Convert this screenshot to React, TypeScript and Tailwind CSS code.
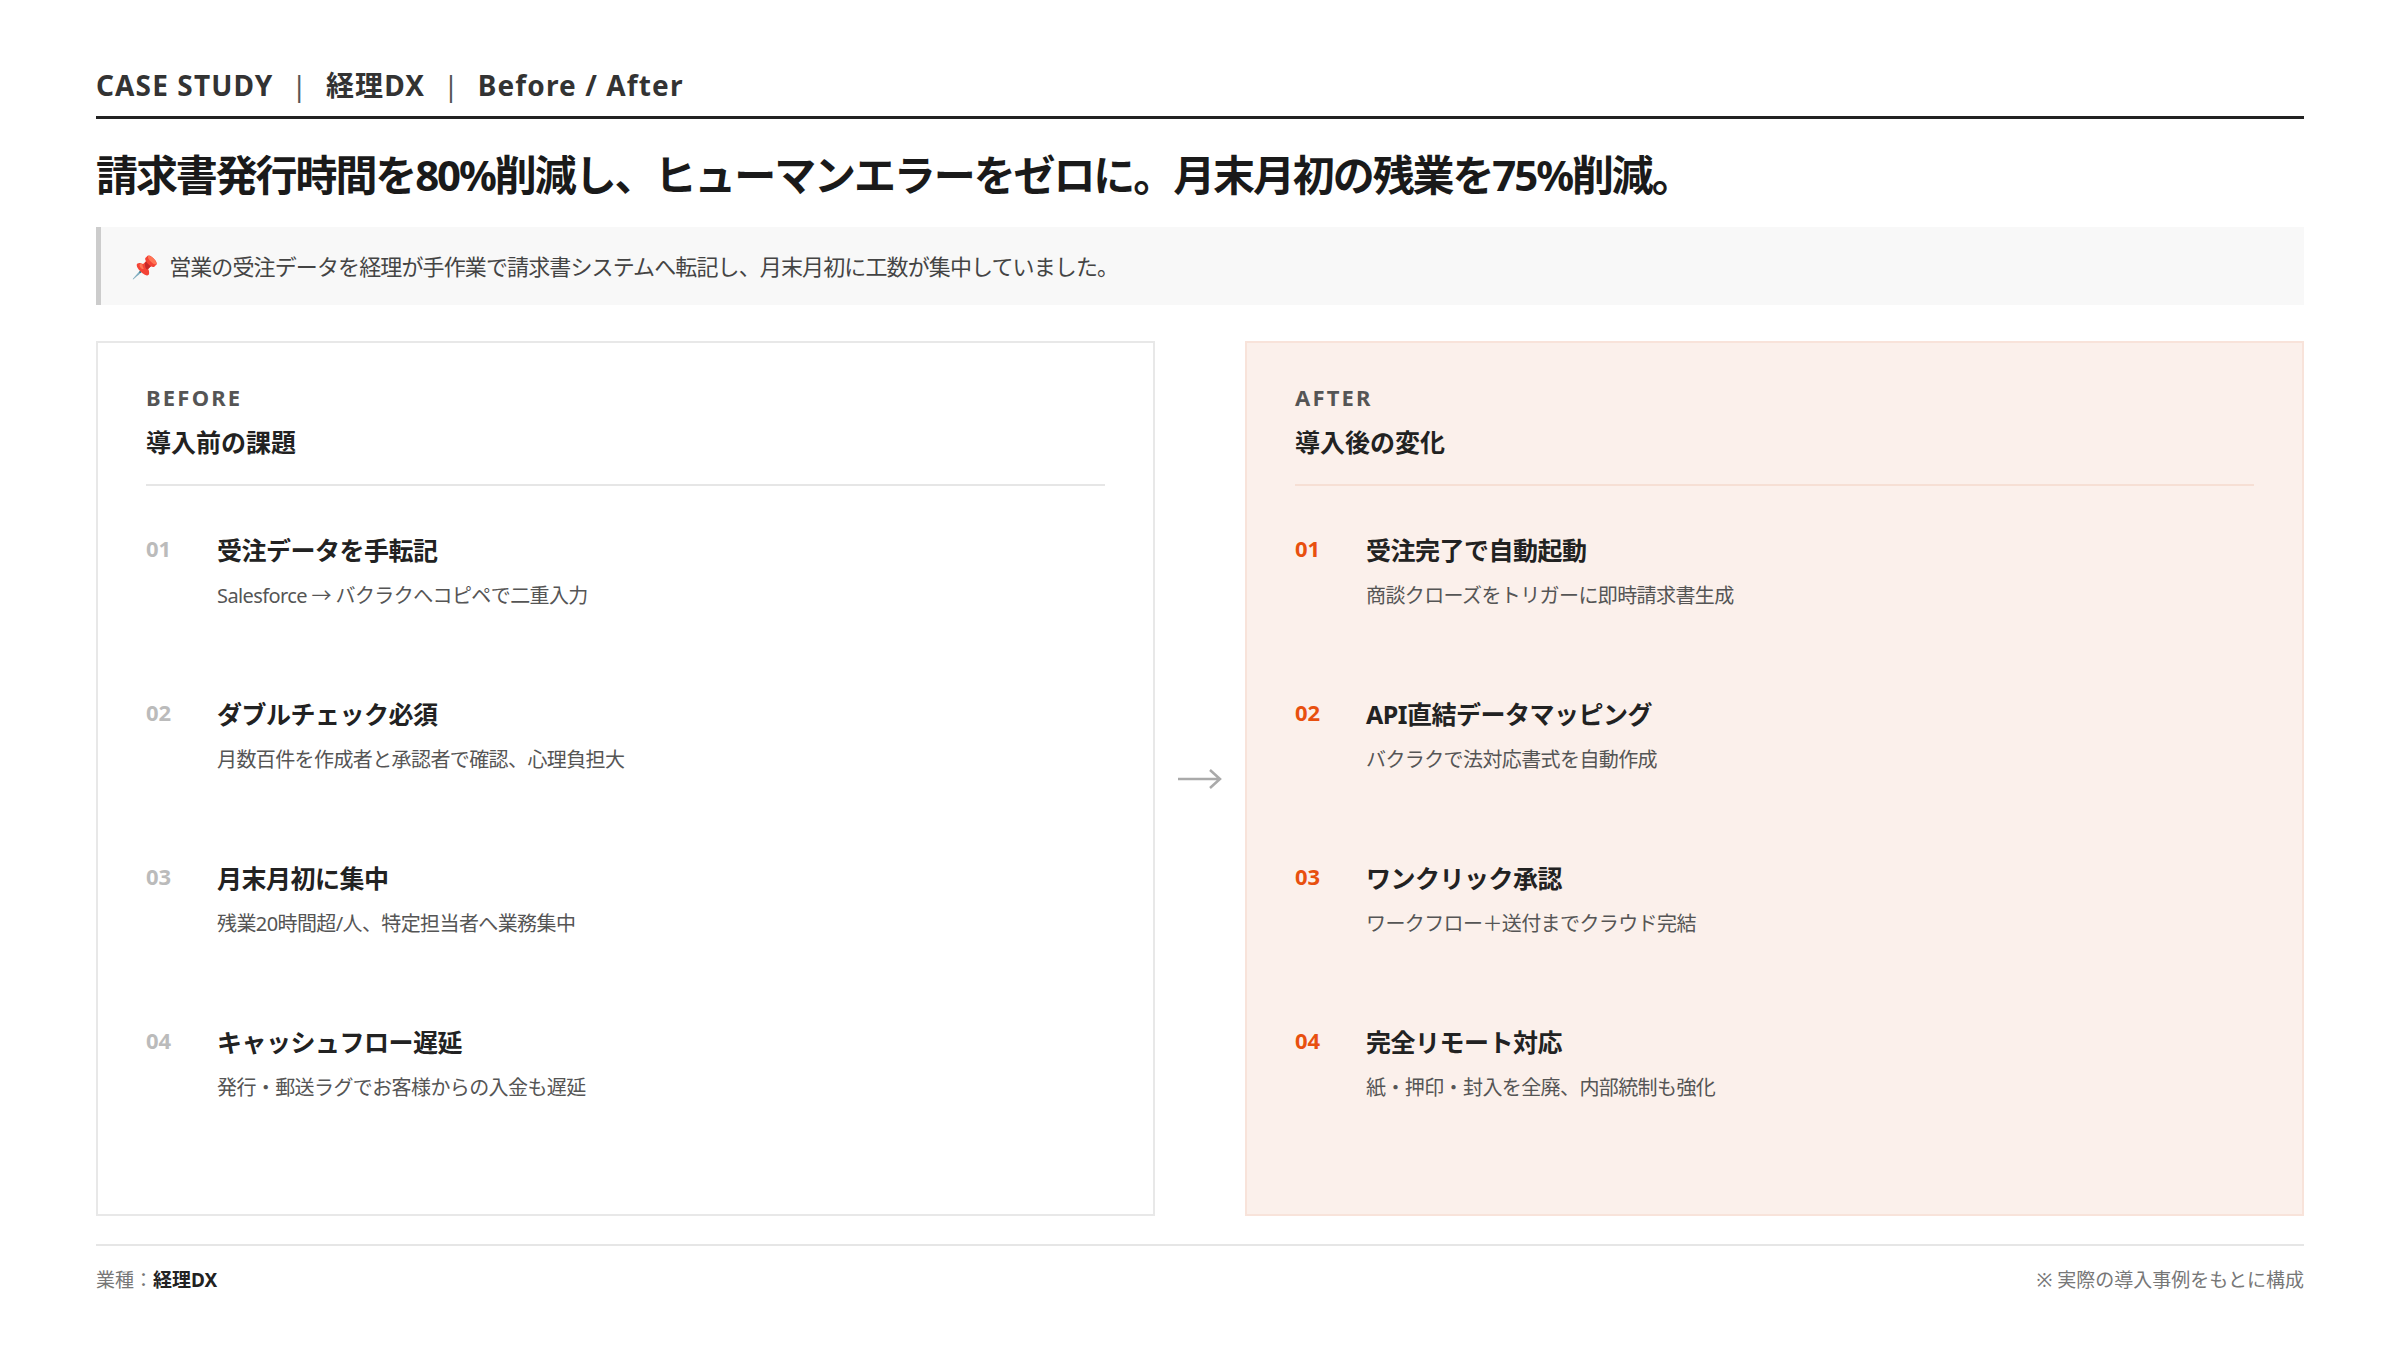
const before = [
  { t: '受注データを手転記', d: 'Salesforce → バクラクへコピペで二重入力' },
  { t: 'ダブルチェック必須', d: '月数百件を作成者と承認者で確認、心理負担大' },
  { t: '月末月初に集中', d: '残業20時間超/人、特定担当者へ業務集中' },
  { t: 'キャッシュフロー遅延', d: '発行・郵送ラグでお客様からの入金も遅延' },
]

const after = [
  { t: '受注完了で自動起動', d: '商談クローズをトリガーに即時請求書生成' },
  { t: 'API直結データマッピング', d: 'バクラクで法対応書式を自動作成' },
  { t: 'ワンクリック承認', d: 'ワークフロー＋送付までクラウド完結' },
  { t: '完全リモート対応', d: '紙・押印・封入を全廃、内部統制も強化' },
]

const Card = ({ label, title, items, isAfter }: { label: string; title: string; items: { t: string; d: string }[]; isAfter?: boolean }) => (
  <div className={`flex-1 border-2 px-[48px] pt-[38px] ${isAfter ? 'bg-[#fbf0eb] border-[#f8e3da]' : 'bg-white border-[#e8e8e8]'}`}>
    <div className="text-[22px] font-bold tracking-[0.1em] text-[#555]">{label}</div>
    <div className="mt-[10px] text-[25px] font-bold text-[#222]">{title}</div>
    <div className={`mt-[22px] h-[2px] ${isAfter ? 'bg-[#f6dfd4]' : 'bg-[#e6e6e6]'}`} />
    <div className="mt-[46px] flex flex-col">
      {items.map((it, i) => (
        <div key={i} className="flex h-[164px]">
          <div className={`w-[71px] text-[22px] font-bold ${isAfter ? 'text-[#e8500f]' : 'text-[#bbb]'}`}>0{i + 1}</div>
          <div>
            <div className="text-[25px] font-bold leading-[36px] tracking-[-0.02em] text-[#222]">{it.t}</div>
            <div className="mt-[13px] text-[20px] tracking-[-0.03em] text-[#555]">{it.d}</div>
          </div>
        </div>
      ))}
    </div>
  </div>
)

export default function App() {
  return (
    <div className="w-[2400px] h-[1350px] bg-white px-[96px] pt-[64px] text-[#222]" style={{ fontFamily: '"Noto Sans", "Noto Sans CJK JP", sans-serif' }}>
      <div className="flex items-center gap-[18px] border-b-[3px] border-[#222] pb-[10px] text-[28px] font-bold tracking-[0.04em] text-[#333]">
        <span>CASE STUDY</span>
        <span className="font-normal text-[#555]">|</span>
        <span>経理DX</span>
        <span className="font-normal text-[#555]">|</span>
        <span>Before / After</span>
      </div>
      <h1 className="mt-[26px] text-[42px] font-bold leading-[60px] tracking-[-0.05em] text-[#1a1a1a]">請求書発行時間を80%削減し、ヒューマンエラーをゼロに。月末月初の残業を75%削減。</h1>
      <div className="mt-[22px] flex h-[78px] items-center gap-[12px] border-l-[5px] border-[#ccc] bg-[#f8f8f8] pl-[30px] text-[22px] tracking-[-0.04em] text-[#444]">
        <span className="text-[22px]">📌</span>
        <span>営業の受注データを経理が手作業で請求書システムへ転記し、月末月初に工数が集中していました。</span>
      </div>
      <div className="mt-[36px] flex h-[875px] items-stretch">
        <Card label="BEFORE" title="導入前の課題" items={before} />
        <div className="flex w-[90px] items-center justify-center">
          <svg width="48" height="22" viewBox="0 0 48 22" fill="none" stroke="#aaa" strokeWidth="2.5">
            <path d="M2 11h42M34 2l10 9-10 9" />
          </svg>
        </div>
        <Card label="AFTER" title="導入後の変化" items={after} isAfter />
      </div>
      <div className="mt-[28px] flex items-center justify-between border-t-2 border-[#e6e6e6] pt-[20px] text-[19px] text-[#777]">
        <span>業種：<b className="text-[#222]">経理DX</b></span>
        <span>※ 実際の導入事例をもとに構成</span>
      </div>
    </div>
  )
}
